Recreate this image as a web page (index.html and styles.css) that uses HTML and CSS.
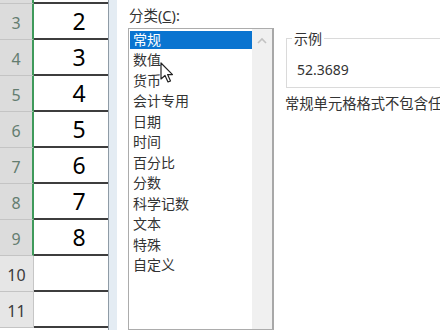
FILE: index.html
```html
<!DOCTYPE html>
<html lang="zh-CN">
<head>
    <meta charset="UTF-8">
    <title>设置单元格格式</title>
    <link rel="stylesheet" href="styles.css">
</head>
<body>
    <div class="sheet">
        <div class="row top"><div class="rowhead sel"></div><div class="cell"></div></div>
        <div class="row"><div class="rowhead sel">3</div><div class="cell">2</div></div>
        <div class="row"><div class="rowhead sel">4</div><div class="cell">3</div></div>
        <div class="row"><div class="rowhead sel">5</div><div class="cell">4</div></div>
        <div class="row"><div class="rowhead sel">6</div><div class="cell">5</div></div>
        <div class="row"><div class="rowhead sel">7</div><div class="cell">6</div></div>
        <div class="row"><div class="rowhead sel">8</div><div class="cell">7</div></div>
        <div class="row"><div class="rowhead sel">9</div><div class="cell">8</div></div>
        <div class="row"><div class="rowhead">10</div><div class="cell"></div></div>
        <div class="row"><div class="rowhead">11</div><div class="cell"></div></div>
    </div>
    <div class="edge"></div>
    <div class="dialog">
        <div class="category">
            <div class="label">分类(<u>C</u>):</div>
            <div class="listbox">
                <ul class="items">
                    <li class="selected">常规</li>
                    <li>数值</li>
                    <li>货币</li>
                    <li>会计专用</li>
                    <li>日期</li>
                    <li>时间</li>
                    <li>百分比</li>
                    <li>分数</li>
                    <li>科学记数</li>
                    <li>文本</li>
                    <li>特殊</li>
                    <li>自定义</li>
                </ul>
                <div class="scrollbar">
                    <svg width="12" height="8" viewBox="0 0 12 8"><path d="M2 6 L6 2 L10 6" fill="none" stroke="#c2c2c2" stroke-width="1.6"/></svg>
                </div>
            </div>
            <svg class="cursor" width="14" height="22" viewBox="0 0 14 22">
                <path d="M1 1 L1 17 L5 13.5 L8 20 L10.5 19 L7.6 12.6 L12.5 12.6 Z" fill="#fff" stroke="#222" stroke-width="1.2" stroke-linejoin="round"/>
            </svg>
        </div>
        <div class="detail">
            <div class="group">
                <span class="legend">示例</span>
                <div class="sample">52.3689</div>
            </div>
            <div class="note">常规单元格格式不包含任</div>
        </div>
    </div>
</body>
</html>
```

FILE: styles.css
```css
body {
    margin: 0;
    width: 440px;
    height: 330px;
    overflow: hidden;
    display: flex;
    background: #fff;
    font-family: "Noto Sans", "Noto Sans CJK SC", sans-serif;
}
.sheet {
    width: 108px;
    flex-shrink: 0;
    display: flex;
    flex-direction: column;
    border-right: 1px solid #8f9ba6;
}
.row {
    display: flex;
    height: 36px;
    flex-shrink: 0;
}
.row.top {
    height: 4px;
}
.rowhead {
    width: 34px;
    box-sizing: border-box;
    background: #e6e6e6;
    border-right: 1px solid #c6c6c6;
    border-bottom: 1px solid #c4c4c4;
    color: #3c3c3c;
    font-size: 16px;
    display: flex;
    align-items: center;
    justify-content: center;
    padding-top: 3px;
}
.rowhead.sel {
    background: #dcdcdc;
    color: #647d70;
    border-right: 2px solid #3f9a5b;
}
.cell {
    flex: 1;
    box-sizing: border-box;
    border-bottom: 2px solid #3d3d3d;
    color: #000;
    font-size: 23px;
    display: flex;
    align-items: center;
    justify-content: center;
    padding-left: 16px;
}
.edge {
    width: 8px;
    flex-shrink: 0;
    background: #e4ecf3;
}
.dialog {
    flex: 1;
    min-width: 0;
    overflow: hidden;
    display: flex;
    padding-left: 11px;
    color: #333;
    font-size: 14px;
}
.category {
    position: relative;
    width: 146px;
    flex-shrink: 0;
    display: flex;
    flex-direction: column;
}
.label {
    font-size: 14.5px;
    margin-top: 4px;
    margin-left: 1px;
    height: 24px;
}
.listbox {
    flex: 1;
    border: 1px solid #acacac;
    border-right: 2px solid #a8a8a8;
    display: flex;
}
.items {
    list-style: none;
    margin: 0;
    padding: 2px 0 0 1px;
    width: 122px;
}
.items li {
    height: 20.5px;
    line-height: 20px;
    padding-left: 3px;
}
.items li.selected {
    background: #0a74d0;
    color: #fff;
    height: 18px;
    line-height: 18px;
    margin-bottom: 1px;
}
.scrollbar {
    flex: 1;
    background: #f0f0f0;
    display: flex;
    justify-content: center;
    padding-top: 8px;
}
.cursor {
    position: absolute;
    left: 32px;
    top: 62px;
}
.detail {
    flex: 1;
    min-width: 0;
    margin-left: 12px;
    padding-top: 38px;
}
.group {
    position: relative;
    border: 1px solid #dadada;
    border-right: none;
    height: 48px;
}
.legend {
    position: absolute;
    left: 5px;
    top: -9px;
    background: #fff;
    padding: 0 2px;
    line-height: 18px;
}
.sample {
    margin-top: 21px;
    margin-left: 10px;
    line-height: 20px;
}
.note {
    margin-top: 6px;
    margin-left: -1px;
    font-size: 14.3px;
    white-space: nowrap;
    line-height: 20px;
}
```
